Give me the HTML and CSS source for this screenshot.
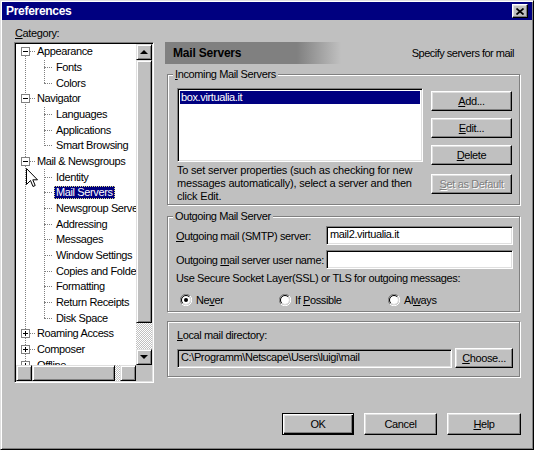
FILE: index.html
```html
<!DOCTYPE html>
<html lang="en">
<head>
  <meta charset="UTF-8">
  <title>Preferences</title>
  <link rel="stylesheet" href="styles.css">
</head>
<body>
  <div class="window">
    <div class="titlebar">
      <span class="title">Preferences</span>
      <span class="close-btn">
        <svg width="8" height="7" viewBox="0 0 8 7"><path d="M0.5 0.5L7.5 6.5M7.5 0.5L0.5 6.5" stroke="#000" stroke-width="1.7"/></svg>
      </span>
    </div>

    <div class="main">
      <!-- cây danh mục -->
      <div class="left">
        <div class="cat-label"><u>C</u>ategory:</div>
        <div class="tree">
          <div class="tree-view">
            <ul class="tree-list">
              <li class="node">
                <div class="row"><svg class="box" width="9" height="9" viewBox="0 0 9 9"><rect x="0.5" y="0.5" width="8" height="8" fill="#fff" stroke="#808080"/><path d="M2 4.5h5" stroke="#000"/></svg><span class="dash"></span><span class="text">Appearance</span></div>
                <ul class="children">
                  <li><div class="row"><span class="text">Fonts</span></div></li>
                  <li><div class="row"><span class="text">Colors</span></div></li>
                </ul>
              </li>
              <li class="node">
                <div class="row"><svg class="box" width="9" height="9" viewBox="0 0 9 9"><rect x="0.5" y="0.5" width="8" height="8" fill="#fff" stroke="#808080"/><path d="M2 4.5h5" stroke="#000"/></svg><span class="dash"></span><span class="text">Navigator</span></div>
                <ul class="children">
                  <li><div class="row"><span class="text">Languages</span></div></li>
                  <li><div class="row"><span class="text">Applications</span></div></li>
                  <li><div class="row"><span class="text">Smart Browsing</span></div></li>
                </ul>
              </li>
              <li class="node">
                <div class="row"><svg class="box" width="9" height="9" viewBox="0 0 9 9"><rect x="0.5" y="0.5" width="8" height="8" fill="#fff" stroke="#808080"/><path d="M2 4.5h5" stroke="#000"/></svg><span class="dash"></span><span class="text">Mail &amp; Newsgroups</span></div>
                <ul class="children">
                  <li><div class="row"><span class="text">Identity</span></div></li>
                  <li><div class="row selected"><span class="text">Mail Servers</span></div></li>
                  <li><div class="row"><span class="text">Newsgroup Servers</span></div></li>
                  <li><div class="row"><span class="text">Addressing</span></div></li>
                  <li><div class="row"><span class="text">Messages</span></div></li>
                  <li><div class="row"><span class="text">Window Settings</span></div></li>
                  <li><div class="row"><span class="text">Copies and Folders</span></div></li>
                  <li><div class="row"><span class="text">Formatting</span></div></li>
                  <li><div class="row"><span class="text">Return Receipts</span></div></li>
                  <li><div class="row"><span class="text">Disk Space</span></div></li>
                </ul>
              </li>
              <li class="node">
                <div class="row"><svg class="box" width="9" height="9" viewBox="0 0 9 9"><rect x="0.5" y="0.5" width="8" height="8" fill="#fff" stroke="#808080"/><path d="M2 4.5h5M4.5 2v5" stroke="#000"/></svg><span class="dash"></span><span class="text">Roaming Access</span></div>
              </li>
              <li class="node">
                <div class="row"><svg class="box" width="9" height="9" viewBox="0 0 9 9"><rect x="0.5" y="0.5" width="8" height="8" fill="#fff" stroke="#808080"/><path d="M2 4.5h5M4.5 2v5" stroke="#000"/></svg><span class="dash"></span><span class="text">Composer</span></div>
              </li>
              <li class="node">
                <div class="row"><svg class="box" width="9" height="9" viewBox="0 0 9 9"><rect x="0.5" y="0.5" width="8" height="8" fill="#fff" stroke="#808080"/><path d="M2 4.5h5M4.5 2v5" stroke="#000"/></svg><span class="dash"></span><span class="text">Offline</span></div>
              </li>
            </ul>
            <!-- con trỏ chuột -->
            <svg class="cursor" width="12" height="20" viewBox="0 0 12 20"><path d="M0.5 0.5V16.5L4.5 12.5L7 18.5L9.2 17.5L6.8 11.8H11.5Z" fill="#fff" stroke="#000"/></svg>
          </div>
          <div class="vscroll">
            <div class="sb-btn"><span class="arrow up"></span></div>
            <div class="sb-thumb v"></div>
            <div class="sb-track"></div>
            <div class="sb-btn"><span class="arrow down"></span></div>
          </div>
          <div class="hscroll">
            <div class="sb-btn"><span class="arrow left"></span></div>
            <div class="sb-thumb h"></div>
            <div class="sb-track"></div>
            <div class="sb-btn"><span class="arrow right"></span></div>
          </div>
          <div class="corner"></div>
        </div>
      </div>

      <!-- bảng bên phải -->
      <div class="right">
        <div class="panel-head">
          <span class="panel-title">Mail Servers</span>
          <span class="panel-desc">Specify servers for mail</span>
        </div>

        <div class="group incoming">
          <span class="legend"><u>I</u>ncoming Mail Servers</span>
          <div class="incoming-body">
            <div class="list-col">
              <div class="listbox">
                <div class="list-item selected">box.virtualia.it</div>
              </div>
              <p class="help-text">To set server properties (such as checking for new<br>messages automatically), select a server and then<br>click Edit.</p>
            </div>
            <div class="btn-col">
              <button class="btn"><u>A</u>dd...</button>
              <button class="btn"><u>E</u>dit...</button>
              <button class="btn"><u>D</u>elete</button>
              <button class="btn disabled"><u>S</u>et as Default</button>
            </div>
          </div>
        </div>

        <div class="group outgoing">
          <span class="legend">Outgoing Mail Server</span>
          <div class="field-row">
            <label class="field-label"><u>O</u>utgoing mail (SMTP) server:</label>
            <div class="input">mail2.virtualia.it</div>
          </div>
          <div class="field-row second">
            <label class="field-label">Outgoing <u>m</u>ail server user name:</label>
            <div class="input"></div>
          </div>
          <div class="ssl-text">Use Secure Socket Layer(SSL) or TLS for outgoing messages:</div>
          <div class="radio-row">
            <span class="radio-item">
              <svg class="radio" width="12" height="12" viewBox="0 0 12 12"><path d="M1.9 10.1A5.5 5.5 0 0 1 10.1 1.9" fill="none" stroke="#808080"/><path d="M10.1 1.9A5.5 5.5 0 0 1 1.9 10.1" fill="none" stroke="#fff"/><circle cx="6" cy="6" r="4" fill="#fff"/><path d="M2.8 9.2A4.5 4.5 0 0 1 9.2 2.8" fill="none" stroke="#000"/><path d="M9.2 2.8A4.5 4.5 0 0 1 2.8 9.2" fill="none" stroke="#dfdfdf"/><circle cx="6" cy="6" r="2" fill="#000"/></svg>
              <span>Ne<u>v</u>er</span>
            </span>
            <span class="radio-item">
              <svg class="radio" width="12" height="12" viewBox="0 0 12 12"><path d="M1.9 10.1A5.5 5.5 0 0 1 10.1 1.9" fill="none" stroke="#808080"/><path d="M10.1 1.9A5.5 5.5 0 0 1 1.9 10.1" fill="none" stroke="#fff"/><circle cx="6" cy="6" r="4" fill="#fff"/><path d="M2.8 9.2A4.5 4.5 0 0 1 9.2 2.8" fill="none" stroke="#000"/><path d="M9.2 2.8A4.5 4.5 0 0 1 2.8 9.2" fill="none" stroke="#dfdfdf"/></svg>
              <span>If <u>P</u>ossible</span>
            </span>
            <span class="radio-item">
              <svg class="radio" width="12" height="12" viewBox="0 0 12 12"><path d="M1.9 10.1A5.5 5.5 0 0 1 10.1 1.9" fill="none" stroke="#808080"/><path d="M10.1 1.9A5.5 5.5 0 0 1 1.9 10.1" fill="none" stroke="#fff"/><circle cx="6" cy="6" r="4" fill="#fff"/><path d="M2.8 9.2A4.5 4.5 0 0 1 9.2 2.8" fill="none" stroke="#000"/><path d="M9.2 2.8A4.5 4.5 0 0 1 2.8 9.2" fill="none" stroke="#dfdfdf"/></svg>
              <span>Al<u>w</u>ays</span>
            </span>
          </div>
        </div>

        <div class="group local">
          <div class="local-label"><u>L</u>ocal mail directory:</div>
          <div class="dir-row">
            <div class="input readonly">C:\Programm\Netscape\Users\luigi\mail</div>
            <button class="btn choose"><u>C</u>hoose...</button>
          </div>
        </div>
      </div>
    </div>

    <div class="footer">
      <button class="btn big default">OK</button>
      <button class="btn big">Cancel</button>
      <button class="btn big"><u>H</u>elp</button>
    </div>
  </div>
</body>
</html>
```

FILE: styles.css
```css
html, body {
  margin: 0;
  padding: 0;
}
body {
  width: 534px;
  height: 450px;
  background: #c0c0c0;
  font-family: "Liberation Sans", Arial, sans-serif;
  font-size: 11px;
  letter-spacing: -0.38px;
  color: #000;
  overflow: hidden;
}
u {
  text-decoration: underline;
  text-underline-offset: 1px;
}
.window {
  box-sizing: border-box;
  width: 534px;
  height: 450px;
  display: flex;
  flex-direction: column;
  border: 1px solid;
  border-color: #dfdfdf #000 #000 #dfdfdf;
  box-shadow: inset 1px 1px #fff, inset -1px -1px #808080;
  padding: 1px;
}
.titlebar {
  height: 18px;
  flex: 0 0 18px;
  display: flex;
  align-items: center;
  justify-content: space-between;
  padding: 0 4px 0 4px;
  background: #000080;
  color: #fff;
  font-size: 12px;
  font-weight: bold;
  letter-spacing: -0.3px;
}
.close-btn {
  box-sizing: border-box;
  width: 16px;
  height: 14px;
  display: flex;
  align-items: center;
  justify-content: center;
  background: #c0c0c0;
  border: 1px solid;
  border-color: #fff #000 #000 #fff;
  box-shadow: inset -1px -1px #808080, inset 1px 1px #dfdfdf;
}

.main {
  display: flex;
  padding: 6px 11px 0 12px;
}
.left {
  width: 140px;
  flex: 0 0 140px;
}
.cat-label {
  line-height: 14px;
  margin-bottom: 2px;
  padding-left: 1px;
}
.tree {
  box-sizing: border-box;
  height: 341px;
  display: grid;
  grid-template-columns: 120px 16px;
  grid-template-rows: 1fr 16px;
  border: 1px solid;
  border-color: #808080 #fff #fff #808080;
  box-shadow: inset 1px 1px #000, inset -1px -1px #dfdfdf;
  padding: 1px;
}
.tree-view {
  position: relative;
  overflow: hidden;
  background: #fff;
}
.tree-list, .children {
  list-style: none;
  margin: 0;
  padding: 0;
}
.tree-list {
  position: relative;
}
.tree-list::before {
  content: "";
  position: absolute;
  left: 9px;
  top: 8px;
  bottom: 0;
  border-left: 1px dotted #808080;
}
.row {
  height: 15.68px;
  display: flex;
  align-items: center;
  white-space: nowrap;
}
.node > .row {
  padding-left: 5px;
}
.box {
  position: relative;
  flex: 0 0 9px;
}
.dash {
  flex: 0 0 5px;
  border-top: 1px dotted #808080;
}
.text {
  flex: 0 0 auto;
  padding: 0 2px;
  line-height: 13px;
}
.children {
  position: relative;
}
.children::before {
  content: "";
  position: absolute;
  left: 28px;
  top: 0;
  bottom: 8px;
  border-left: 1px dotted #808080;
}
.children .row::before {
  content: "";
  flex: 0 0 8px;
  margin-left: 28px;
  border-top: 1px dotted #808080;
}
.children .text {
  margin-left: 2px;
}
.row.selected .text {
  background: #000080;
  color: #fff;
  outline: 1px dotted #e0e080;
  outline-offset: -1px;
}
.cursor {
  position: absolute;
  left: 10px;
  top: 124px;
}

/* thanh cuộn */
.vscroll {
  display: flex;
  flex-direction: column;
}
.hscroll {
  display: flex;
}
.sb-btn, .sb-thumb {
  box-sizing: border-box;
  background: #c0c0c0;
  border: 1px solid;
  border-color: #dfdfdf #000 #000 #dfdfdf;
  box-shadow: inset 1px 1px #fff, inset -1px -1px #808080;
}
.sb-btn {
  width: 16px;
  height: 16px;
  flex: 0 0 16px;
  display: flex;
  align-items: center;
  justify-content: center;
}
.sb-thumb.v {
  height: 263px;
  flex: 0 0 263px;
}
.sb-thumb.h {
  width: 83px;
  flex: 0 0 83px;
}
.sb-track {
  flex: 1;
  background: repeating-conic-gradient(#fff 0 25%, #c0c0c0 0 50%) 0 0 / 2px 2px;
}
.corner {
  background: #c0c0c0;
}
.arrow {
  width: 0;
  height: 0;
}
.arrow.up {
  border-left: 4px solid transparent;
  border-right: 4px solid transparent;
  border-bottom: 4px solid #000;
}
.arrow.down {
  border-left: 4px solid transparent;
  border-right: 4px solid transparent;
  border-top: 4px solid #000;
}
.arrow.left {
  border-top: 4px solid transparent;
  border-bottom: 4px solid transparent;
  border-right: 4px solid #000;
}
.arrow.right {
  border-top: 4px solid transparent;
  border-bottom: 4px solid transparent;
  border-left: 4px solid #000;
}

/* bảng bên phải */
.right {
  width: 356px;
  flex: 0 0 356px;
  margin-left: 11px;
  margin-top: 16px;
}
.panel-head {
  height: 22px;
  display: flex;
  align-items: center;
  justify-content: space-between;
  padding: 0 7px 0 8px;
  background: linear-gradient(90deg, #808080 0 132px, rgba(128, 128, 128, 0) 176px);
}
.panel-title {
  font-size: 12px;
  font-weight: bold;
  letter-spacing: -0.2px;
}
.panel-desc {
  letter-spacing: -0.5px;
}
.group {
  box-sizing: border-box;
  position: relative;
  width: 353px;
  margin-left: 2px;
  border: 1px solid #808080;
  box-shadow: inset 1px 1px #fff, 1px 1px #fff;
}
.legend {
  position: absolute;
  top: -7px;
  left: 5px;
  padding: 0 2px;
  line-height: 13px;
  background: #c0c0c0;
}
.incoming {
  height: 131px;
  margin-top: 10px;
  padding: 13px 0 0 9px;
}
.incoming-body {
  display: flex;
}
.list-col {
  width: 246px;
}
.listbox {
  box-sizing: border-box;
  height: 74px;
  background: #fff;
  border: 1px solid;
  border-color: #808080 #fff #fff #808080;
  box-shadow: inset 1px 1px #000, inset -1px -1px #dfdfdf;
  padding: 2px;
}
.list-item {
  line-height: 13px;
  padding-left: 1px;
}
.list-item.selected {
  background: #000080;
  color: #fff;
}
.help-text {
  margin: 2px 0 0;
  line-height: 13px;
  white-space: nowrap;
  letter-spacing: -0.2px;
}
.btn-col {
  width: 81px;
  margin-left: 8px;
  padding-top: 3px;
  display: flex;
  flex-direction: column;
}
.btn {
  box-sizing: border-box;
  height: 20px;
  padding: 0;
  font: inherit;
  letter-spacing: inherit;
  color: #000;
  background: #c0c0c0;
  border: 1px solid;
  border-color: #fff #000 #000 #fff;
  box-shadow: inset -1px -1px #808080, inset 1px 1px #dfdfdf;
  text-align: center;
}
.btn-col .btn + .btn {
  margin-top: 7px;
}
.btn-col .btn.disabled {
  margin-top: 9px;
  color: #808080;
  text-shadow: 1px 1px #fff;
}

.outgoing {
  height: 96px;
  margin-top: 11px;
  padding: 9px 6px 0 8px;
}
.field-row {
  display: flex;
  align-items: center;
  height: 19px;
}
.field-row.second {
  margin-top: 5px;
}
.field-label {
  flex: 1;
  white-space: nowrap;
}
.input {
  box-sizing: border-box;
  width: 187px;
  height: 19px;
  line-height: 15px;
  padding: 0 3px;
  background: #fff;
  border: 1px solid;
  border-color: #808080 #fff #fff #808080;
  box-shadow: inset 1px 1px #000, inset -1px -1px #dfdfdf;
  white-space: nowrap;
  overflow: hidden;
}
.ssl-text {
  margin-top: 2px;
  line-height: 14px;
  white-space: nowrap;
}
.radio-row {
  display: grid;
  grid-template-columns: 99px 109px 1fr;
  margin-top: 7px;
  padding-left: 4px;
  height: 15px;
  align-items: center;
}
.radio-item {
  display: flex;
  align-items: center;
  gap: 4px;
  white-space: nowrap;
}

.local {
  height: 56px;
  margin-top: 9px;
  padding: 6px 0 0 9px;
}
.local-label {
  line-height: 14px;
}
.dir-row {
  display: flex;
  align-items: center;
  margin-top: 6px;
}
.input.readonly {
  width: 275px;
  background: #c0c0c0;
}
.btn.choose {
  width: 58px;
  margin-left: 3px;
}

.footer {
  margin-top: auto;
  display: flex;
  justify-content: flex-end;
  gap: 10px;
  padding: 0 11px 13px 0;
}
.btn.big {
  height: 22px;
  width: 73px;
}
.btn.default {
  width: 72px;
  border-color: #000;
  box-shadow: inset 1px 1px #fff, inset -1px -1px #000, inset -2px -2px #808080, inset 2px 2px #dfdfdf;
}
.footer .btn.big:last-child {
  width: 74px;
}
```
